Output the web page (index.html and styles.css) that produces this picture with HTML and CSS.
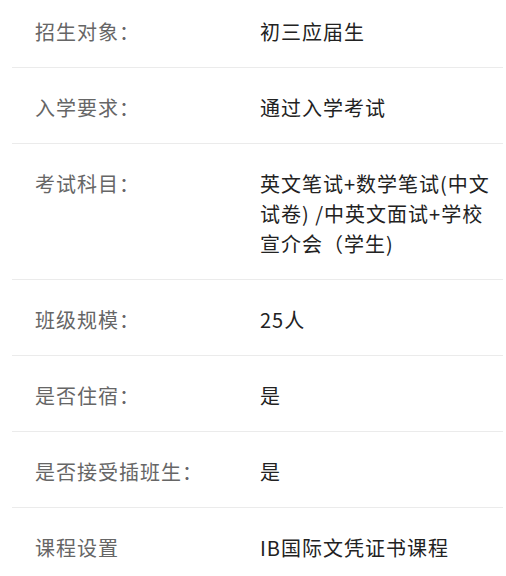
FILE: index.html
```html
<!DOCTYPE html>
<html lang="zh-CN">
<head>
<meta charset="utf-8">
<title>招生信息</title>
<link rel="stylesheet" href="styles.css">
</head>
<body>
<div class="info-list">
  <div class="row"><div class="label">招生对象：</div><div class="value">初三应届生</div></div>
  <div class="row"><div class="label">入学要求：</div><div class="value">通过入学考试</div></div>
  <div class="row"><div class="label">考试科目：</div><div class="value">英文笔试+数学笔试(中文试卷) /中英文面试+学校宣介会（学生)</div></div>
  <div class="row"><div class="label">班级规模：</div><div class="value">25人</div></div>
  <div class="row"><div class="label">是否住宿：</div><div class="value">是</div></div>
  <div class="row"><div class="label">是否接受插班生：</div><div class="value">是</div></div>
  <div class="row"><div class="label">课程设置</div><div class="value">IB国际文凭证书课程</div></div>
</div>
</body>
</html>
```
FILE: styles.css
```css
html, body {
  margin: 0;
  padding: 0;
  background: #fff;
}
body {
  font-family: "Noto Sans CJK SC", "Noto Sans", sans-serif;
  font-size: 20px;
  line-height: 30px;
  letter-spacing: 1px;
}
.info-list {
  margin: 0 3px 0 12px;
}
.row {
  display: grid;
  grid-template-columns: 225px 243px;
  padding: 25px 0 20px 23px;
  border-bottom: 1px solid #ebebeb;
}
.row:first-child {
  padding-top: 17px;
}
.row:last-child {
  border-bottom: none;
}
.label {
  color: #666;
}
.value {
  color: #222;
}
```
